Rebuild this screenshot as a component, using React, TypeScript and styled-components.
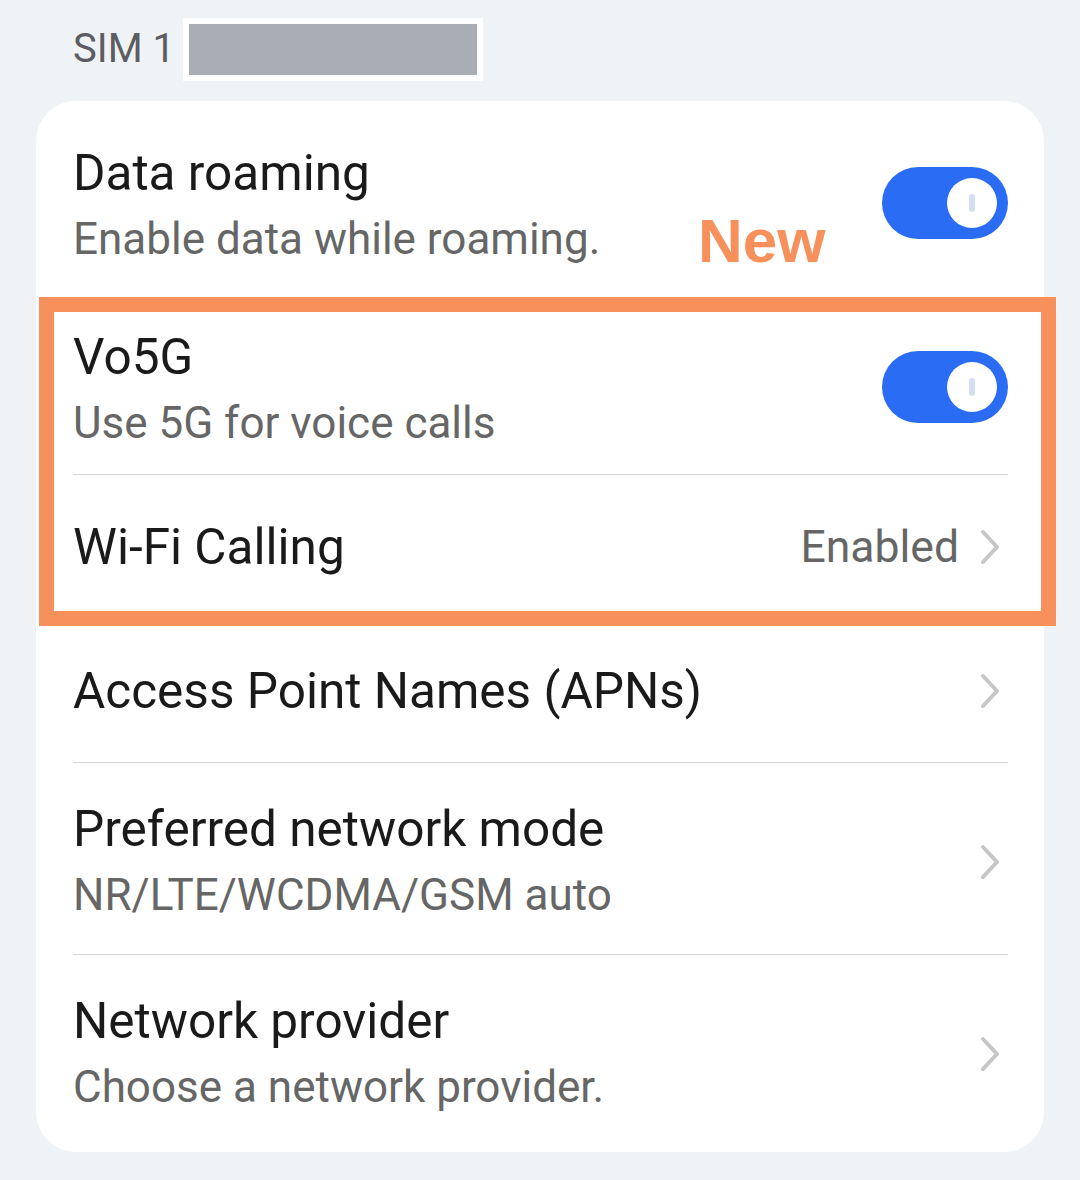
import React from "react";
import styled, { createGlobalStyle } from "styled-components";

const Global = createGlobalStyle`
  html, body { margin: 0; padding: 0; background: #f0f3f6; }
  body { font-family: Roboto, "Noto Sans", Arial, sans-serif; -webkit-font-smoothing: antialiased; }
`;

const Page = styled.div`
  width: 1080px;
  height: 1180px;
  box-sizing: border-box;
  padding: 0 36px;
  background: #f0f3f6;
  overflow: hidden;
`;

const Header = styled.div`
  height: 101px;
  display: flex;
  align-items: flex-start;
  padding: 18px 0 0 37px;
  box-sizing: border-box;
  gap: 8px;
`;

const SimLabel = styled.span`
  font-size: 40px;
  line-height: 62px;
  color: #5c5d62;
  font-weight: 400;
`;

const Redacted = styled.div`
  width: 300px;
  height: 63px;
  box-sizing: border-box;
  border: 6px solid #ffffff;
  background: #a9aeb4;
`;

const Card = styled.div`
  position: relative;
  background: #ffffff;
  border-radius: 40px;
  padding: 0 36px 0 37px;
  height: 1051px;
  box-sizing: border-box;
`;

const Row = styled.div<{ $pt: number; $pb: number }>`
  display: flex;
  align-items: center;
  gap: 24px;
  padding: ${(p) => p.$pt}px 0 ${(p) => p.$pb}px;
`;

const Texts = styled.div`
  flex: 1;
  display: flex;
  flex-direction: column;
`;

const Title = styled.div`
  font-size: 49.5px;
  line-height: 66px;
  color: #1a1a1a;
  font-weight: 400;
`;

const Subtitle = styled.div`
  font-size: 44px;
  line-height: 66px;
  color: #666666;
`;

const Value = styled.span`
  font-size: 44.5px;
  color: #666666;
`;

const Divider = styled.div`
  height: 1px;
  background: #d6d6d6;
`;

const Track = styled.div`
  width: 126px;
  height: 72px;
  border-radius: 36px;
  background: #2a6cf4;
  display: flex;
  align-items: center;
  justify-content: flex-end;
  padding-right: 11px;
  margin-bottom: 6px;
  box-sizing: border-box;
  flex-shrink: 0;
`;

const Knob = styled.div`
  width: 50px;
  height: 50px;
  border-radius: 50%;
  background: #ffffff;
  display: flex;
  align-items: center;
  justify-content: center;
`;

const KnobMark = styled.div`
  width: 6px;
  height: 18px;
  border-radius: 3px;
  background: #d4ddf4;
`;

const Trailing = styled.div`
  display: flex;
  align-items: center;
  gap: 21px;
`;

const ChevronBox = styled.div`
  display: flex;
  align-items: center;
  margin-right: 8px;
  flex-shrink: 0;
`;

const Group = styled.div`
  position: relative;
`;

const Highlight = styled.div`
  position: absolute;
  left: -34px;
  right: -48px;
  top: -7px;
  bottom: -7px;
  border: 15px solid #f7905a;
  pointer-events: none;
`;

const NewTag = styled.span`
  position: absolute;
  left: 662px;
  top: 104px;
  font-family: "Liberation Sans", Arial, sans-serif;
  font-weight: 700;
  font-size: 62px;
  line-height: 72px;
  color: #f7905a;
`;

const Toggle = () => (
  <Track>
    <Knob>
      <KnobMark />
    </Knob>
  </Track>
);

const Chevron = () => (
  <ChevronBox>
    <svg width="20" height="36" viewBox="0 0 20 36" fill="none">
      <polyline
        points="3,3 17,18 3,33"
        stroke="#c6c6c6"
        strokeWidth="4"
        strokeLinecap="round"
        strokeLinejoin="round"
      />
    </svg>
  </ChevronBox>
);

export default function App() {
  return (
    <Page>
      <Global />
      <Header>
        <SimLabel>SIM 1</SimLabel>
        <Redacted />
      </Header>
      <Card>
        <NewTag>New</NewTag>
        <Row $pt={39} $pb={31}>
          <Texts>
            <Title>Data roaming</Title>
            <Subtitle>Enable data while roaming.</Subtitle>
          </Texts>
          <Toggle />
        </Row>
        <Divider />
        <Group>
          <Row $pt={20} $pb={18}>
            <Texts>
              <Title>Vo5G</Title>
              <Subtitle>Use 5G for voice calls</Subtitle>
            </Texts>
            <Toggle />
          </Row>
          <Divider />
          <Row $pt={39} $pb={39}>
            <Texts>
              <Title>Wi-Fi Calling</Title>
            </Texts>
            <Trailing>
              <Value>Enabled</Value>
              <Chevron />
            </Trailing>
          </Row>
          <Highlight />
        </Group>
        <Divider />
        <Row $pt={38} $pb={38}>
          <Texts>
            <Title>Access Point Names (APNs)</Title>
          </Texts>
          <Chevron />
        </Row>
        <Divider />
        <Row $pt={33} $pb={26}>
          <Texts>
            <Title>Preferred network mode</Title>
            <Subtitle>NR/LTE/WCDMA/GSM auto</Subtitle>
          </Texts>
          <Chevron />
        </Row>
        <Divider />
        <Row $pt={33} $pb={32}>
          <Texts>
            <Title>Network provider</Title>
            <Subtitle>Choose a network provider.</Subtitle>
          </Texts>
          <Chevron />
        </Row>
      </Card>
    </Page>
  );
}
